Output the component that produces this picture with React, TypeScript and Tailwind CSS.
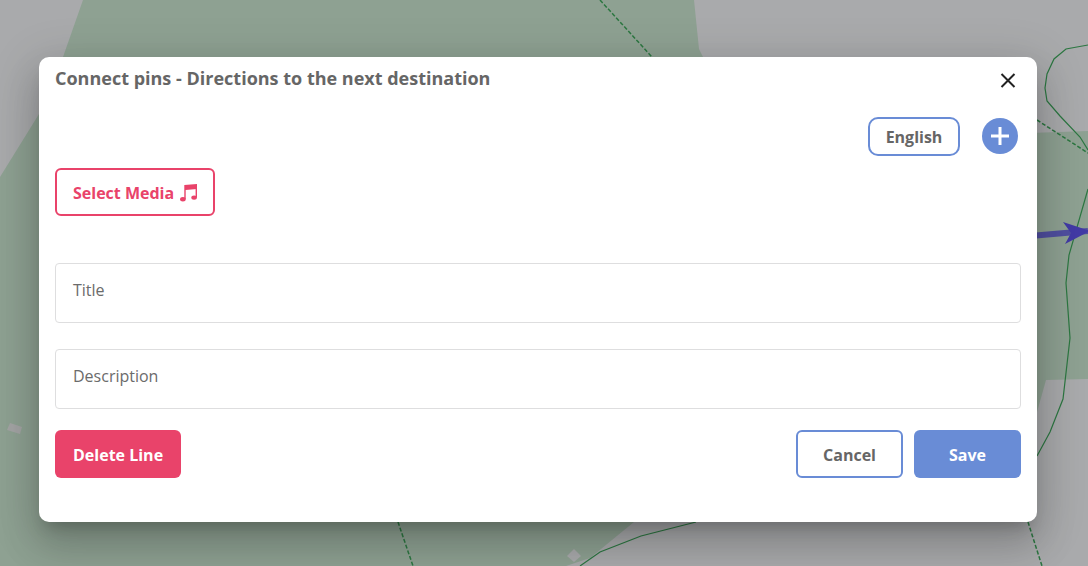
import React from "react";

function MapBackdrop() {
  return (
    <svg
      className="absolute inset-0 h-full w-full"
      viewBox="0 0 1088 566"
      preserveAspectRatio="xMidYMid slice"
      aria-hidden="true"
    >
      <rect width="1088" height="566" fill="#a9aaac" />
      <path d="M83 0H694L699 49L703 57L800 300L634 522L590 558L566 566H0V177L39 114L63 57Z" fill="#8ea192" />
      <path d="M1000 134L1088 131V379L1046 380L1037 412L1000 430Z" fill="#8ea192" />
      <path d="M10 423L22 427L20 434L7 430Z" fill="#a3a4a4" />
      <path d="M574 549L581 556L574 562L567 556Z" fill="#a9aaac" />
      <g fill="none" stroke="#2c7741" strokeWidth="1.2">
        <path d="M1088 45L1066 49L1054 59L1047 74L1045 88L1047 101L1060 116L1080 137L1088 150" />
        <path d="M1088 189L1069 255L1066 283L1070 338L1063 399L1050 432L1037 456" />
        <path d="M696 522L641 536L600 552L580 566" />
        <path d="M600 0L652 57M1037 120L1088 153M398 522L413 566M1028 522L1042 566" strokeWidth="1.5" strokeDasharray="4 2" />
      </g>
      <path d="M1030 236L1088 231" stroke="#504fa0" strokeWidth="6" />
      <path d="M1063 222L1090 231L1065 244L1071 233Z" fill="#423aa5" />
    </svg>
  );
}

function MusicIcon() {
  return (
    <svg width="17" height="18" viewBox="0 0 17 18" fill="currentColor" aria-hidden="true">
      <path d="M4.3 1L17 0V5L5.7 6V15H4.3Z" />
      <path d="M15.6 3H17V13.4H15.6Z" />
      <ellipse cx="2.9" cy="15.2" rx="2.8" ry="2.2" />
      <ellipse cx="14.1" cy="13.6" rx="2.8" ry="2.2" />
    </svg>
  );
}

function Field({ id, label }: { id: string; label: string }) {
  return (
    <div className="flex h-[60px] cursor-text flex-col rounded border border-[#dededf] bg-white px-[17px] pt-[14px]">
      <label htmlFor={id} className="text-base leading-6 text-[#6b6b6b]">
        {label}
      </label>
      <input id={id} type="text" className="h-5 w-full text-sm outline-none" />
    </div>
  );
}

export default function App() {
  return (
    <div className="relative min-h-screen overflow-hidden bg-[#a9aaac] font-['Open_Sans',sans-serif] text-[#666]">
      <MapBackdrop />
      <div className="relative pt-[57px] pr-[51px] pb-11 pl-[39px]">
        <section
          role="dialog"
          aria-modal="true"
          aria-labelledby="dialog-title"
          className="rounded-[10px] bg-white px-4 pb-11 shadow-[0_11px_15px_-7px_rgba(0,0,0,0.2),0_24px_38px_3px_rgba(0,0,0,0.14),0_9px_46px_8px_rgba(0,0,0,0.12)]"
        >
          <header className="flex items-start justify-between pt-2">
            <h2 id="dialog-title" className="text-lg leading-[26px] font-bold">
              Connect pins - Directions to the next destination
            </h2>
            <button type="button" aria-label="Close" className="flex h-8 w-[26px] items-center justify-center text-[#222]">
              <svg width="16" height="16" viewBox="0 0 16 16" stroke="currentColor" strokeWidth="2" aria-hidden="true">
                <path d="M1.5 1L14.5 14M14.5 1L1.5 14" />
              </svg>
            </button>
          </header>

          <div className="mt-5 flex items-start justify-end gap-[22px] pr-[3px]">
            <button type="button" className="h-[39px] w-[92px] rounded-[10px] border-2 border-[#698cd6] text-base font-bold">
              English
            </button>
            <button
              type="button"
              aria-label="Add language"
              className="mt-px flex h-9 w-9 items-center justify-center rounded-full bg-[#698cd6] text-white"
            >
              <svg width="18" height="18" viewBox="0 0 18 18" stroke="currentColor" strokeWidth="3" aria-hidden="true">
                <path d="M9 0V18M0 9H18" />
              </svg>
            </button>
          </div>

          <button
            type="button"
            className="mt-3 flex h-12 items-center gap-[6px] rounded-md border-2 border-[#e9436a] px-4 pt-[2px] text-base font-bold text-[#e9436a]"
          >
            Select Media
            <MusicIcon />
          </button>

          <form className="mt-[47px]" onSubmit={(event) => event.preventDefault()}>
            <div className="flex flex-col gap-[26px]">
              <Field id="title" label="Title" />
              <Field id="description" label="Description" />
            </div>
            <div className="mt-[21px] flex flex-wrap items-center gap-[11px]">
              <button type="button" className="mr-auto h-12 rounded-md bg-[#e9436a] px-[18px] pt-[2px] text-base font-bold text-white">
                Delete Line
              </button>
              <button type="button" className="h-12 w-[107px] rounded-md border-2 border-[#698cd6] pt-[2px] text-base font-bold">
                Cancel
              </button>
              <button type="submit" className="h-12 w-[107px] rounded-md bg-[#698cd6] pt-[2px] text-base font-bold text-white">
                Save
              </button>
            </div>
          </form>
        </section>
      </div>
    </div>
  );
}
